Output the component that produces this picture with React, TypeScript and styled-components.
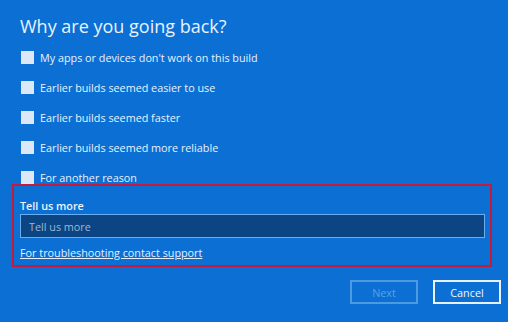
import styled, { createGlobalStyle } from "styled-components";

const GlobalStyle = createGlobalStyle`
  body {
    margin: 0;
    background: #0b6fd4;
  }
`;

const Page = styled.div`
  width: 508px;
  height: 322px;
  box-sizing: border-box;
  padding: 0 7px 0 12px;
  background: #0b6fd4;
  color: #eef4fc;
  font-family: "Open Sans", "Noto Sans", sans-serif;
  display: flex;
  flex-direction: column;
`;

const Title = styled.h1`
  margin: 0;
  padding: 15px 0 0 8px;
  font-size: 18px;
  line-height: 22px;
  font-weight: 400;
  color: #e9f2fc;
`;

const Options = styled.div`
  display: flex;
  flex-direction: column;
  gap: 17px;
  margin-top: 14px;
  padding-left: 9px;
`;

const Option = styled.label`
  display: flex;
  align-items: center;
  gap: 6px;
  height: 13px;
  font-size: 10.8px;
  color: #eaf2fc;
`;

const Box = styled.span`
  width: 13px;
  height: 13px;
  background: #dce8f6;
  flex: none;
`;

const Section = styled.div`
  margin-right: 9px;
  border: 2px solid #c51a3c;
  padding: 13px 5px 5px 6px;
  display: flex;
  flex-direction: column;
`;

const Label = styled.div`
  font-size: 10.8px;
  line-height: 14px;
  font-weight: 600;
  margin-bottom: 1px;
`;

const Input = styled.input`
  box-sizing: border-box;
  height: 24px;
  width: 100%;
  background: #0b4584;
  border: 1.5px solid #6aaef0;
  color: #eaf2fc;
  font-family: inherit;
  font-size: 10.8px;
  padding: 0 8px;
  outline: none;
  &::placeholder {
    color: #9db8d6;
  }
`;

const SupportLink = styled.a`
  margin-top: 8px;
  font-size: 10.8px;
  line-height: 14px;
  color: #e6f0fc;
  text-decoration: underline;
  align-self: flex-start;
`;

const Buttons = styled.div`
  display: flex;
  justify-content: flex-end;
  gap: 15px;
  margin-top: 13px;
`;

const Button = styled.button<{ $disabled?: boolean }>`
  width: 68px;
  height: 24px;
  background: transparent;
  border: 2px solid ${p => (p.$disabled ? "#4c9ae2" : "#e8f1fc")};
  color: ${p => (p.$disabled ? "#5aa2e6" : "#f2f7fd")};
  font-family: inherit;
  font-size: 10.8px;
  padding: 0;
`;

const reasons = [
  "My apps or devices don't work on this build",
  "Earlier builds seemed easier to use",
  "Earlier builds seemed faster",
  "Earlier builds seemed more reliable",
  "For another reason",
];

function App() {
  return (
    <Page>
      <GlobalStyle />
      <Title>Why are you going back?</Title>
      <Options>
        {reasons.map(r => (
          <Option key={r}>
            <Box />
            {r}
          </Option>
        ))}
      </Options>
      <Section>
        <Label>Tell us more</Label>
        <Input placeholder="Tell us more" />
        <SupportLink href="#">For troubleshooting contact support</SupportLink>
      </Section>
      <Buttons>
        <Button $disabled>Next</Button>
        <Button>Cancel</Button>
      </Buttons>
    </Page>
  );
}

export default App;
